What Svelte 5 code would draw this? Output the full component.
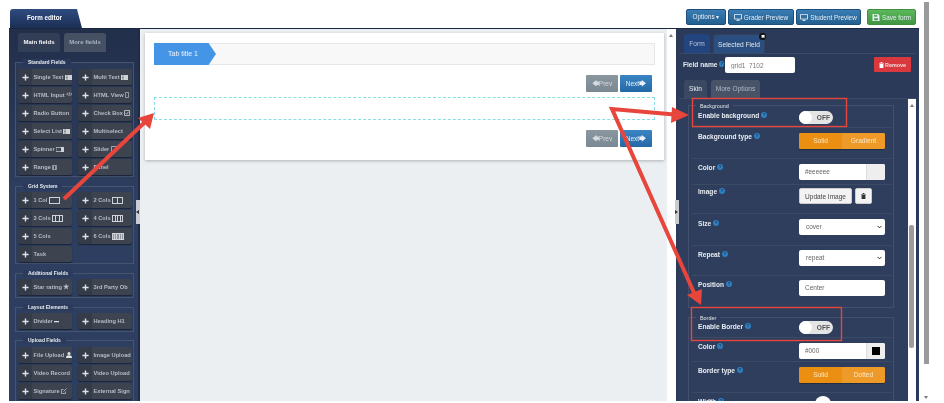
<script>
  const plus = 'M3.2 0.5h1.6v2.7h2.7v1.6H4.8v2.7H3.2V4.8H.5V3.2h2.7z';
  const groups = [
    { title: 'Standard Fields', cls: 'g1', items: [['Single Text','lines'],['Multi Text','lines'],['HTML Input','code'],['HTML View','page'],['Radio Button',''],['Check Box','check'],['Select List','lines'],['Multiselect',''],['Spinner','spin'],['Slider','box'],['Range','range'],['Panel','']] },
    { title: 'Grid System', cls: 'g2', items: [['1 Col','c1'],['2 Cols','c2'],['3 Cols','c3'],['4 Cols','c4'],['5 Cols',''],['6 Cols','c6'],['Task','']] },
    { title: 'Additional Fields', cls: 'g3', items: [['Star rating','star'],['3rd Party Ob','']] },
    { title: 'Layout Elements', cls: 'g4', items: [['Divider','dash'],['Heading H1','']] },
    { title: 'Upload Fields', cls: 'g5', items: [['File Upload','user'],['Image Upload',''],['Video Record',''],['Video Upload',''],['Signature','edit'],['External Sign','']] }
  ];
  const cols = { c1: 1, c2: 2, c3: 3, c4: 4, c6: 5 };
</script>

<div class="page">
  <header class="top">
    <div class="main-tab">Form editor</div>
    <div class="actions">
      <button class="act blue">Options ▾</button>
      <button class="act blue"><svg viewBox="0 0 10 9" class="mon"><path d="M.5.5h9v6h-9zM3 8.5h4M5 6.5v2" fill="none" stroke="currentColor" stroke-width="1.1"/></svg>Grader Preview</button>
      <button class="act blue"><svg viewBox="0 0 10 9" class="mon"><path d="M.5.5h9v6h-9zM3 8.5h4M5 6.5v2" fill="none" stroke="currentColor" stroke-width="1.1"/></svg>Student Preview</button>
      <button class="act green"><svg viewBox="0 0 9 9" class="mon"><path d="M0 0h7l2 2v7H0zM2 1v2.5h4V1zM2 5.5V8h5V5.5z" fill="currentColor" fill-rule="evenodd"/></svg>Save form</button>
    </div>
  </header>

  <div class="shell">
    <div class="editor">
      <aside class="left">
        <div class="tabs left-tabs">
          <span class="tab on">Main fields</span>
          <span class="tab">More fields</span>
        </div>
        {#each groups as g}
          <section class="group {g.cls}">
            <h4>{g.title}</h4>
            <div class="btns">
              {#each g.items as [label, icon]}
                <div class="fbtn">
                  <span class="grip"><svg viewBox="0 0 8 8" width="8" height="8"><path d={plus} fill="#dfe3e8"/></svg></span>
                  <span class="lbl">{label}
                    {#if icon === 'lines'}<svg class="ic" viewBox="0 0 7 5"><path d="M0 0h7v5H0z" fill="#cfd3d8"/><path d="M1 1h2M1 2.5h2M1 4h2" stroke="#444" stroke-width=".5"/></svg>
                    {:else if icon === 'code'}<span class="mini">&lt;/&gt;</span>
                    {:else if icon === 'page'}<svg class="ic narrow4" viewBox="0 0 4 6"><path d="M.5.5h3v5h-3z" fill="none" stroke="#cfd3d8" stroke-width=".6"/></svg>
                    {:else if icon === 'check'}<svg class="ic narrow6" viewBox="0 0 6 6"><path d="M.5.5h5v5h-5zM1.5 3l1.2 1.2L4.5 1.8" fill="none" stroke="#cfd3d8" stroke-width=".8"/></svg>
                    {:else if icon === 'spin'}<svg class="ic wide8" viewBox="0 0 8 5"><path d="M0 .5h8v4H0z" fill="none" stroke="#cfd3d8" stroke-width=".7"/><path d="M5 0h3v5H5z" fill="#cfd3d8"/></svg>
                    {:else if icon === 'box'}<svg class="ic narrow6" viewBox="0 0 6 6"><path d="M.5.5h5v5h-5z" fill="none" stroke="#cfd3d8" stroke-width=".7"/></svg>
                    {:else if icon === 'range'}<svg class="ic narrow5" viewBox="0 0 5 5"><path d="M.5.5h4v4h-4z" fill="none" stroke="#cfd3d8" stroke-width=".6"/><path d="M1.5 1v3M3.5 1v3" stroke="#cfd3d8" stroke-width=".6"/></svg>
                    {:else if icon === 'star'}<span class="mini big">★</span>
                    {:else if icon === 'dash'}<svg class="ic narrow5" viewBox="0 0 5 5"><path d="M0 2h5v1.2H0z" fill="#dfe3e8"/></svg>
                    {:else if icon === 'user'}<svg class="ic narrow6" viewBox="0 0 6 6"><circle cx="3" cy="1.6" r="1.5" fill="#dfe3e8"/><path d="M0 6c0-2 1-2.7 3-2.7S6 4 6 6z" fill="#dfe3e8"/></svg>
                    {:else if icon === 'edit'}<svg class="ic narrow6" viewBox="0 0 6 6"><path d="M4.5 3.5v2h-4v-4h2M2.5 3.5L5.5.5" fill="none" stroke="#cfd3d8" stroke-width=".7"/></svg>
                    {:else if icon && cols[icon]}<span class="cols {icon}">{#each Array(cols[icon]) as _}<i></i>{/each}</span>
                    {/if}
                  </span>
                </div>
              {/each}
            </div>
          </section>
        {/each}
      </aside>

      <main class="center">
        <div class="canvas">
          <div class="card">
            <div class="wizard"><span class="step">Tab title 1</span></div>
            <div class="pager">
              <span class="pbtn grey">🡄Prev</span><span class="pbtn blue2">Next🡆</span>
            </div>
            <div class="drop"></div>
            <div class="pager">
              <span class="pbtn grey">🡄Prev</span><span class="pbtn blue2">Next🡆</span>
            </div>
          </div>
        </div>
        <div class="track"><span class="arrow-up"></span></div>
      </main>

      <aside class="right">
        <div class="tabs right-tabs">
          <span class="tab form">Form</span>
          <span class="tab sel">Selected Field<b class="close">✖</b></span>
        </div>
        <div class="name-row">
          <label class="flabel name-label">Field name <i class="q">?</i></label>
          <input class="inp name" value="grid1_7102" readonly />
          <button class="remove"><svg viewBox="0 0 6 7" width="5" height="6"><path d="M0 1h6v.8H0zM2 0h2v1H2zM.7 2.2h4.6V7H.7z" fill="#fff"/></svg> Remove</button>
        </div>
        <div class="tabs skin-tabs">
          <span class="tab on">Skin</span>
          <span class="tab">More Options</span>
        </div>
        <div class="skin">
          <div class="skin-body">
            <section class="set bg">
              <h5>Background</h5>
              <div class="row r-enable">
                <label class="flabel">Enable background <i class="q">?</i></label>
                <span class="switch"><span class="knob"></span>OFF</span>
              </div>
              <div class="row r-type">
                <label class="flabel">Background type <i class="q">?</i></label>
                <span class="seg"><span>Solid</span><span class="alt">Gradient</span></span>
              </div>
              <div class="row r-color">
                <label class="flabel">Color <i class="q">?</i></label>
                <span class="colorbox"><span>#eeeeee</span><em class="swatch"></em></span>
              </div>
              <div class="row r-image">
                <label class="flabel">Image <i class="q">?</i></label>
                <span class="imgbtns"><button class="wbtn">Update Image</button><button class="wbtn trash"><svg viewBox="0 0 6 7" width="5" height="6"><path d="M0 1h6v.8H0zM2 0h2v1H2zM.7 2.2h4.6V7H.7z" fill="#333"/></svg></button></span>
              </div>
              <div class="row r-size">
                <label class="flabel">Size <i class="q">?</i></label>
                <span class="sel-box">cover<svg viewBox="0 0 6 4" width="5" height="4"><path d="M.6.6L3 3l2.4-2.4" fill="none" stroke="#222" stroke-width="1.1"/></svg></span>
              </div>
              <div class="row r-repeat">
                <label class="flabel">Repeat <i class="q">?</i></label>
                <span class="sel-box">repeat<svg viewBox="0 0 6 4" width="5" height="4"><path d="M.6.6L3 3l2.4-2.4" fill="none" stroke="#222" stroke-width="1.1"/></svg></span>
              </div>
              <div class="row r-pos">
                <label class="flabel">Position <i class="q">?</i></label>
                <span class="sel-box plain">Center</span>
              </div>
            </section>
            <section class="set bd">
              <h5>Border</h5>
              <div class="row r-enable2">
                <label class="flabel">Enable Border <i class="q">?</i></label>
                <span class="switch"><span class="knob"></span>OFF</span>
              </div>
              <div class="row r-color2">
                <label class="flabel">Color <i class="q">?</i></label>
                <span class="colorbox"><span>#000</span><em class="swatch black"><u></u></em></span>
              </div>
              <div class="row r-type2">
                <label class="flabel">Border type <i class="q">?</i></label>
                <span class="seg"><span>Solid</span><span class="alt">Dotted</span></span>
              </div>
              <div class="row r-width">
                <label class="flabel">Width <i class="q">?</i></label>
                <span class="slider"><span class="thumb"></span></span>
              </div>
            </section>
          </div>
          <div class="skin-track"><span class="arrow-up"></span><span class="skin-thumb"></span></div>
        </div>
      </aside>
    </div>
    <div class="page-scroll"><span class="page-thumb"></span><span class="arrow-down"></span></div>
  </div>

  <span class="handle h1"></span>
  <span class="handle h2"></span>

  <svg class="notes" viewBox="0 0 944 403" width="944" height="403">
    <rect x="692.5" y="98.5" width="154" height="28" fill="none" stroke="#e8453c" stroke-width="1.4"/>
    <rect x="691.5" y="307.5" width="150" height="33" fill="none" stroke="#e8453c" stroke-width="1.4"/>
    <g fill="none" stroke="#e8453c" stroke-width="4">
      <path d="M64 199L145 122"/>
      <path d="M680 115L612 109L695 295"/>
    </g>
    <path d="M154 113L150 129L138 118z" fill="#e8453c"/>
    <path d="M689 115L671 123L672 107z" fill="#e8453c"/>
    <path d="M701 305L687 295L702 289z" fill="#e8453c"/>
  </svg>
</div>

<style>
  :global(body) { margin: 0; background: #fff; }
  .page {
    position: relative; width: 944px; height: 403px; overflow: hidden; background: #fff;
    font-family: "Liberation Sans", Arial, sans-serif; color: #fff; filter: blur(.35px);
  }
  .top { height: 28px; display: flex; align-items: flex-end; justify-content: space-between; box-sizing: border-box; padding: 0 28px 2px 10px; position: relative; }
  .main-tab {
    width: 72px; height: 19px; margin-bottom: -2px; box-sizing: border-box; padding: 5px 0 0 17px;
    background: linear-gradient(#2f4b80, #1c2f54); border-radius: 3px 5px 0 0;
    font-size: 6.3px; font-weight: bold; clip-path: polygon(0 0, 93% 0, 100% 100%, 0 100%);
  }
  .actions { display: flex; gap: 2px; align-self: flex-start; margin-top: 9px; }
  .act {
    height: 16px; border: 1px solid #1d4f7c; border-radius: 2px; padding: 0; color: #e6eef6;
    font: 6.4px "Liberation Sans", sans-serif; display: flex; align-items: center; justify-content: center; gap: 2px;
  }
  .act:nth-child(1) { width: 40px; }
  .act:nth-child(2) { width: 66px; }
  .act:nth-child(3) { width: 65px; }
  .act:nth-child(4) { width: 49px; margin-left: 4px; }
  .blue { background: linear-gradient(#3a7db4, #23608f); }
  .green { background: linear-gradient(#5cb85c, #419641); border-color: #3e8f3e; }
  .mon { width: 8px; height: 7px; }

  .shell { display: flex; margin-left: 9px; height: 373px; }
  .editor { width: 910px; display: flex; background: #1e2c48; border-top: 1px solid #1a2740; box-sizing: border-box; height: 373px; }

  .left { width: 131px; flex: none; padding: 4px 6px 0; box-sizing: border-box; border-right: 2px solid #1e2c48; overflow: hidden; background: linear-gradient(#222f4b, #2d3e60 45%); }
  .tabs { display: flex; }
  .tab { font-size: 6px; display: block; }
  .left-tabs { gap: 4px; padding-left: 3px; height: 19px; }
  .left-tabs .tab { height: 19px; width: 42px; box-sizing: border-box; padding-top: 6px; text-align: center; border-radius: 3px 3px 0 0; background: #465063; color: #aab2bf; font-weight: bold; }
  .left-tabs .tab.on { background: #323e55; color: #f2f4f7; }

  .group { border: 1px solid #45546f; position: relative; margin: 0 0 9px; padding: 0 2px; width: 119px; box-sizing: border-box; }
  .group h4 { position: absolute; left: 7px; top: -4px; margin: 0; padding: 0 5px; font-size: 5px; line-height: 7px; font-weight: bold; color: #e8ebef; background: #2b3b5c; }
  .g1 { margin-top: 10px; height: 115px; padding-top: 6px; background: #2a3957; }
  .g1 h4 { background: #29385a; }
  .g2 { height: 78px; padding-top: 5px; }
  .g3 { height: 25px; padding-top: 5px; }
  .g4 { height: 25px; padding-top: 5px; margin-bottom: 8px; }
  .g5 { height: 80px; padding-top: 6px; }
  .btns { display: grid; grid-template-columns: 54px 54px; column-gap: 6px; row-gap: 2px; }
  .fbtn { height: 16px; display: flex; background: #3d4450; border-radius: 2px; box-shadow: 0 1px 1px #1a2438; overflow: hidden; }
  .grip { width: 14px; flex: none; background: #353c49; display: flex; align-items: center; justify-content: center; }
  .grip svg { width: 7px; height: 7px; }
  .lbl { font-size: 5.7px; font-weight: bold; color: #b6bcc6; line-height: 16px; white-space: nowrap; display: flex; align-items: center; gap: 1.5px; padding-left: 1.5px; }
  .ic { width: 7px; height: 5px; flex: none; }
  .narrow4 { width: 4px; height: 6px; }
  .narrow5 { width: 5px; }
  .narrow6 { width: 6px; height: 6px; }
  .wide8 { width: 8px; }
  .mini { font-size: 4.5px; }
  .mini.big { font-size: 7px; }
  .cols { display: inline-flex; border: .6px solid #cfd3d8; height: 5px; width: 9px; box-sizing: content-box; }
  .cols i { flex: 1; border-right: .5px solid #cfd3d8; }
  .cols i:last-child { border-right: 0; }
  .cols.c6 { background: #8f959e; width: 10px; }

  .center { width: 536px; flex: none; display: flex; background: #ebeff2; }
  .canvas { flex: 1; padding: 4px 3px 0 5px; min-width: 0; }
  .card { background: #fff; height: 127px; box-sizing: border-box; padding: 10px 9px 0; box-shadow: 0 1px 3px rgba(0,0,0,.25); }
  .wizard { height: 22px; background: #f8f8f8; border: 1px solid #e7e7e7; box-sizing: border-box; }
  .step {
    display: block; width: 62px; height: 22px; margin: -1px 0 0 -1px; background: #4595e6; color: #eef5fd; font-size: 7px; line-height: 21px; box-sizing: border-box; padding-left: 14px;
    clip-path: polygon(0 0, 88% 0, 100% 50%, 88% 100%, 0 100%);
  }
  .pager { display: flex; justify-content: flex-end; gap: 2px; padding-right: 3px; margin: 10px 0 5px; }
  .pbtn { width: 32px; height: 17px; border-radius: 1px; font-size: 6.5px; line-height: 17px; text-align: center; }
  .grey { background: linear-gradient(#8b979f, #7b8892); color: #d5dbe0; }
  .blue2 { background: linear-gradient(#3b85c4, #2468a6); color: #e8f1f8; }
  .drop { height: 23px; border: 1px dashed #86dfe5; box-sizing: border-box; }
  .track { width: 9px; background: #fff; position: relative; }
  .arrow-up { position: absolute; top: 5px; left: 2px; border: 2px solid transparent; border-top: 0; border-bottom: 3px solid #777; }

  .right { flex: 1; min-width: 0; background: #2a3a58; padding: 5px 3px 0 3px; box-sizing: border-box; overflow: hidden; position: relative; }
  .right-tabs { gap: 3px; padding-left: 5px; height: 19px; }
  .right-tabs .tab { height: 19px; box-sizing: border-box; padding-top: 6px; text-align: center; font-size: 6.6px; border-radius: 3px 3px 0 0; position: relative; }
  .form { width: 26px; background: #23457f; color: #b8c4d6; }
  .sel { width: 52px; background: #2a4e80; color: #dfe6ee; border: 1px solid #33415c; border-bottom: 0; }
  .close { position: absolute; right: -2px; top: -2px; width: 7px; height: 7px; border-radius: 50%; background: #111; color: #fff; font-size: 4.5px; line-height: 7px; text-align: center; }
  .name-row { display: flex; align-items: flex-start; height: 27px; border-top: 1px solid #3a4966; padding: 3px 0 0 4px; box-sizing: border-box; }
  .flabel { font-size: 6.6px; font-weight: bold; color: #e8ecf1; display: flex; gap: 2px; align-items: center; white-space: nowrap; height: 8px; }
  .name-label { margin-top: 3px; width: 41px; }
  .q { display: inline-block; width: 6px; height: 6px; border-radius: 50%; background: #2f7fc0; color: #15304f; font-size: 4px; line-height: 6px; text-align: center; font-style: normal; }
  .inp.name { width: 70px; height: 16px; box-sizing: border-box; border: 0; border-radius: 2px; margin-left: 1px; padding: 0 6px; font: 6.5px "Liberation Sans", sans-serif; color: #777; }
  .remove { margin-left: auto; margin-right: 5px; width: 37px; height: 15px; border: 0; border-radius: 1px; background: #d9383e; color: #f6dede; font: bold 5.4px "Liberation Sans", sans-serif; display: flex; align-items: center; justify-content: center; gap: 1px; padding: 0; }
  .skin-tabs { gap: 4px; padding-left: 5px; height: 18px; }
  .skin-tabs .tab { height: 18px; box-sizing: border-box; padding-top: 5px; font-size: 6.6px; text-align: center; border-radius: 3px 3px 0 0; background: #485368; color: #b0b8c5; }
  .skin-tabs .tab.on { width: 23px; background: #3a4961; color: #e8ecf1; }
  .skin-tabs .tab:not(.on) { width: 49px; }
  .skin { display: flex; height: 330px; border-top: 1px solid #3a4966; }
  .skin-body { width: 229px; flex: none; background: #2e3e5c; padding: 6px 0 0 9px; box-sizing: border-box; }
  .skin-track { width: 8px; background: #fff; position: relative; }
  .skin-thumb { position: absolute; left: 1px; top: 126px; width: 5px; height: 123px; background: #9c9c9c; border-radius: 2px; }
  .set { width: 206px; border: 1px solid #42506b; position: relative; box-sizing: border-box; padding: 0 2px 0 3px; }
  .set h5 { position: absolute; left: 7px; top: -3px; margin: 0; font-size: 5.4px; font-weight: normal; line-height: 7px; padding: 0 4px; background: #2e3e5c; color: #e2e6eb; }
  .bg { height: 203px; }
  .bd { height: 100px; margin-top: 9px; }
  .row { display: grid; grid-template-columns: 101px 86px; align-items: start; border-bottom: 1px solid #3b4a65; box-sizing: border-box; padding: 5px 0 0 6px; }
  .row:last-child { border-bottom: 0; }
  .r-enable { height: 22px; }
  .r-type { height: 31px; }
  .r-type .flabel { margin-top: -1px; }
  .r-color { height: 26px; }
  .r-color .flabel { margin-top: -1px; }
  .r-image { height: 29px; padding-top: 3px; }
  .r-image .flabel { margin-top: -1px; }
  .r-size { height: 32px; }
  .r-repeat { height: 30px; padding-top: 4px; }
  .r-pos { height: 32px; padding-top: 4px; }
  .r-enable2 { height: 20px; padding-top: 3px; }
  .r-enable2 .flabel { margin-top: 1px; }
  .r-color2 { height: 24px; }
  .r-color2 .flabel { margin-top: -1px; }
  .r-type2 { height: 31px; }
  .r-type2 .flabel { margin-top: -1px; }
  .r-width { height: 20px; padding-top: 4px; }
  .switch { width: 34px; height: 13px; border-radius: 7px; background: #e4e4e4; color: #555; font-size: 6.6px; font-weight: bold; line-height: 13px; text-align: right; padding-right: 3px; box-sizing: border-box; position: relative; }
  .knob { position: absolute; left: 0; top: 0; width: 13px; height: 13px; border-radius: 50%; background: #fff; }
  .seg { width: 86px; height: 16px; display: flex; background: #f09a1a; border-radius: 2px; overflow: hidden; box-shadow: 0 1px 1px rgba(0,0,0,.3); }
  .seg span { flex: 1; font-size: 6.6px; line-height: 16px; text-align: center; color: #fbe7c8; background: #ea8f12; }
  .seg .alt { background: #ee9a28; }
  .colorbox { width: 86px; height: 16px; background: #fff; border-radius: 2px; display: flex; color: #666; font-size: 6.4px; line-height: 16px; overflow: hidden; }
  .colorbox span { flex: 1; padding-left: 6px; }
  .swatch { width: 19px; background: #eee; border-left: 1px solid #ddd; display: flex; align-items: center; justify-content: center; box-sizing: border-box; }
  .swatch u { width: 8px; height: 8px; background: #000; display: block; }
  .imgbtns { width: 86px; display: flex; gap: 3px; }
  .wbtn { height: 16px; border: 1px solid #ccc; background: #f3f3f3; border-radius: 2px; font: 6.5px "Liberation Sans", sans-serif; color: #444; padding: 0; width: 53px; }
  .wbtn.trash { width: 17px; }
  .sel-box { width: 86px; height: 16px; background: #fff; border-radius: 2px; color: #666; font-size: 6.5px; line-height: 16px; padding: 0 3px 0 7px; box-sizing: border-box; display: flex; justify-content: space-between; align-items: center; }
  .sel-box.plain { padding-left: 6px; }
  .slider { width: 86px; height: 6px; background: #e4e4e4; border-radius: 3px; margin-top: 4px; position: relative; }
  .thumb { position: absolute; left: 16px; top: -5px; width: 16px; height: 16px; border-radius: 50%; background: #fff; }

  .page-scroll { width: 5px; margin-left: 5px; position: relative; height: 373px; }
  .page-thumb { position: absolute; top: -26px; left: 0; width: 5px; height: 362px; background: #9a9a9a; }
  .arrow-down { position: absolute; top: 368px; left: 0; border: 2px solid transparent; border-bottom: 0; border-top: 3px solid #777; }

  .handle { position: absolute; width: 4px; height: 24px; background: #c9ccd0; }
  .handle::after { content: ""; position: absolute; top: 10px; left: 0; border: 2px solid transparent; border-left: 0; border-right: 3px solid #333; }
  .h1 { left: 136px; top: 200px; }
  .h2 { left: 675px; top: 200px; }
  .h2::after { border-right: 0; border-left: 3px solid #333; }
  .notes { position: absolute; left: 0; top: 0; pointer-events: none; }
</style>
